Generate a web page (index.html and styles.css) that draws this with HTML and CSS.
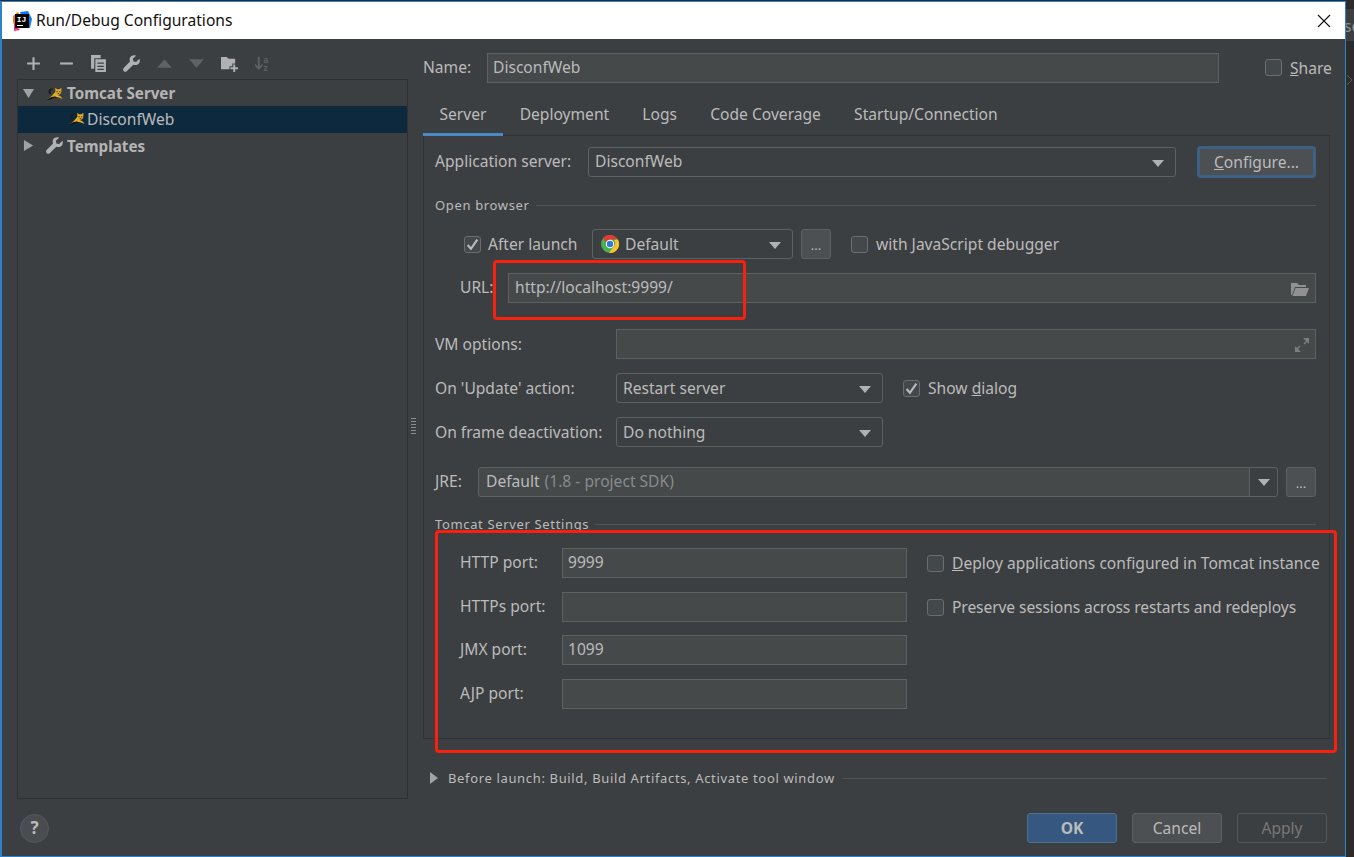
FILE: index.html
```html
<!DOCTYPE html>
<html lang="en">
<head>
<meta charset="utf-8">
<title>Run/Debug Configurations</title>
<link rel="stylesheet" href="styles.css">
</head>
<body>
<div class="screen">
  <div class="edge-tab">se</div>
  <svg class="edge-chevron" viewBox="0 0 6 12"><path d="M0 1 5 6 0 11" /></svg>
  <div class="dialog">
    <header class="titlebar">
      <svg class="app-logo" viewBox="0 0 20 20" width="20" height="20">
        <path d="M1 5 L6 1 L9 6 L3 16 L1 11Z" fill="#f97a12"/>
        <path d="M2 12 L8 19 L2 20Z" fill="#fc3172"/>
        <path d="M8 1 L16 0 L20 8 L18 17 L13 16Z" fill="#087cfa"/>
        <rect x="3" y="3" width="14" height="14" fill="#000"/>
        <rect x="5" y="14" width="6" height="1" fill="#fff"/>
        <text x="4.800" y="11" class="app-logo-text">IJ</text>
      </svg>
      <span class="title">Run/Debug Configurations</span>
      <svg class="close" viewBox="0 0 14 14" width="14" height="14"><path d="M1 1 L13 13 M13 1 L1 13" stroke="#111" stroke-width="1.100" fill="none"/></svg>
    </header>

    <div class="body">
      <aside class="left">
        <div class="toolbar">
          <svg class="tool" viewBox="0 0 16 16"><path d="M7 2h2v5h5v2H9v5H7V9H2V7h5z"/></svg>
          <svg class="tool" viewBox="0 0 16 16"><path d="M2 7h12v2H2z"/></svg>
          <svg class="tool" viewBox="0 0 16 16"><path d="M1 0h9v3H4v10H1z"/><path fill-rule="evenodd" d="M5 4h10v12H5zM7 7v1.300h6V7zM7 10v1.300h6V10zM7 13v1.200h6V13z"/></svg>
          <svg class="tool" viewBox="0 0 16 16"><path d="M15.500 3.500 12.300 6.500 9.800 6 9.300 3.600 12.300.7C10 -.3 7.300.5 6.500 2.800 6.100 4 6.200 5.100 6.600 6.100L.6 12.300C-.1 13.100-.1 14.300.7 15.200 1.600 16 2.800 16 3.500 15.200L9.700 9.200C12 10 14.500 9.200 15.500 7 16 5.900 16 4.600 15.500 3.500Z"/></svg>
          <svg class="tool tool-off" viewBox="0 0 16 16"><path d="M8 4 15 12H1z"/></svg>
          <svg class="tool tool-off" viewBox="0 0 16 16"><path d="M1 4h14L8 12z"/></svg>
          <svg class="tool" viewBox="0 0 18 18"><path d="M0 2h6l2 2h7v5h-3v3H9v3H0z"/><path d="M13 10h2v3h3v2h-3v3h-2v-3h-3v-2h3z"/></svg>
          <svg class="tool tool-off" viewBox="0 0 18 18"><path d="M4 2h2v10l3-3v2.500L5 16 1 11.500V9l3 3z"/><text x="10" y="8" class="sort-text">a</text><text x="10" y="17" class="sort-text">z</text></svg>
        </div>
        <div class="tree">
          <div class="tree-row tree-bold">
            <svg class="twisty" viewBox="0 0 12 12"><path d="M0 1h12L6 11z"/></svg>
            <svg class="cat" viewBox="0 0 18 14"><use href="#cat"/></svg>
            <span>Tomcat Server</span>
          </div>
          <div class="tree-row tree-selected">
            <svg class="cat" viewBox="0 0 18 14"><use href="#cat"/></svg>
            <span>DisconfWeb</span>
          </div>
          <div class="tree-row tree-bold tree-templates">
            <svg class="twisty" viewBox="0 0 12 12"><path d="M1 0l10 6-10 6z"/></svg>
            <svg class="wrench" viewBox="0 0 16 16"><path d="M15.500 3.500 12.300 6.500 9.800 6 9.300 3.600 12.300.7C10 -.3 7.300.5 6.500 2.800 6.100 4 6.200 5.100 6.600 6.100L.6 12.300C-.1 13.100-.1 14.300.7 15.200 1.600 16 2.800 16 3.500 15.200L9.700 9.200C12 10 14.500 9.200 15.500 7 16 5.900 16 4.600 15.500 3.500Z"/></svg>
            <span>Templates</span>
          </div>
        </div>
        <div class="help">?</div>
      </aside>

      <div class="splitter"><span class="grip"></span></div>

      <main class="right">
        <div class="name-row">
          <label class="name-label">Name:</label>
          <div class="field name-field">DisconfWeb</div>
          <div class="share"><span class="check"></span><span><u>S</u>hare</span></div>
        </div>

        <nav class="tabs">
          <span class="tab tab-active">Server</span>
          <span class="tab">Deployment</span>
          <span class="tab">Logs</span>
          <span class="tab">Code Coverage</span>
          <span class="tab">Startup/Connection</span>
        </nav>

        <section class="panel">
          <div class="row row-app">
            <label class="label-app">Application server:</label>
            <div class="select select-app">DisconfWeb<i class="arrow"></i></div>
            <button class="btn-configure"><u>C</u>onfigure...</button>
          </div>

          <div class="group-title title-browser"><span>Open browser</span><i></i></div>

          <div class="row row-launch">
            <span class="check check-on"><svg viewBox="0 0 14 14"><path d="M2.500 7.500 5.500 11 11.500 2.500" /></svg></span>
            <span class="after-label">After launch</span>
            <div class="select select-browser">
              <svg class="chrome" viewBox="0 0 18 18">
                <circle cx="9" cy="9" r="9" fill="#4caf50"/>
                <path d="M9 0a9 9 0 0 1 7.800 4.500H9A4.500 4.500 0 0 0 4.900 7.200L2 2.700A9 9 0 0 1 9 0z" fill="#e53935"/>
                <path d="M16.800 4.500A9 9 0 0 1 8 18l4.500-6.200A4.500 4.500 0 0 0 13 5z" fill="#fbc02d"/>
                <circle cx="9" cy="9" r="4.200" fill="#fff"/>
                <circle cx="9" cy="9" r="3.200" fill="#2d7dd2"/>
              </svg>
              Default<i class="arrow"></i></div>
            <span class="btn-more">...</span>
            <span class="check check-js"></span>
            <span>with <u>J</u>avaScript debugger</span>
          </div>

          <div class="row row-url">
            <label class="label-url">URL:</label>
            <div class="field field-url">http://localhost:9999/
              <svg class="folder" viewBox="0 0 18 14"><path d="M0 1h6l2 2h7v2H4L1 13H0z"/><path d="M4.500 6H18l-3 8H1.500z"/></svg>
            </div>
          </div>

          <div class="row row-vm">
            <label class="label-wide">VM options:</label>
            <div class="field field-grow">
              <svg class="expand" viewBox="0 0 16 16"><path d="M9 1h6v6l-2-2-2.500 2.500-1-1L12 4zM7 15H1V9l2 2 2.500-2.500 1 1L4 12z"/></svg>
            </div>
          </div>

          <div class="row row-update">
            <label class="label-wide">On 'Update' action:</label>
            <div class="select select-action">Restart server<i class="arrow"></i></div>
            <span class="check check-on check-dialog"><svg viewBox="0 0 14 14"><path d="M2.500 7.500 5.500 11 11.500 2.500" /></svg></span>
            <span>Show <u>d</u>ialog</span>
          </div>

          <div class="row row-frame">
            <label class="label-wide">On frame deactivation:</label>
            <div class="select select-action">Do nothing<i class="arrow"></i></div>
          </div>

          <div class="row row-jre">
            <label class="label-jre">JRE:</label>
            <div class="jre-combo">
              <div class="jre-text">Default <span class="muted">(1.8 - project SDK)</span></div>
              <div class="jre-arrow"><i class="arrow arrow-static"></i></div>
            </div>
            <span class="btn-more">...</span>
          </div>

          <div class="group-title title-tomcat"><span>Tomcat Server Settings</span><i></i></div>

          <div class="ports">
            <div class="port-col">
              <div class="row port"><label class="label-port">HTTP port:</label><div class="field field-port">9999</div></div>
              <div class="row port"><label class="label-port">HTTPs port:</label><div class="field field-port"></div></div>
              <div class="row port"><label class="label-port">JMX port:</label><div class="field field-port">1099</div></div>
              <div class="row port"><label class="label-port">AJP port:</label><div class="field field-port"></div></div>
            </div>
            <div class="opt-col">
              <div class="opt"><span class="check"></span><span><u>D</u>eploy applications configured in Tomcat instance</span></div>
              <div class="opt"><span class="check"></span><span class="opt-preserve">Preserve sessions across restarts and redeploys</span></div>
            </div>
          </div>
        </section>

        <div class="before">
          <svg class="before-arrow" viewBox="0 0 8 12"><path d="M0 0l8 6-8 6z"/></svg>
          <span>Before launch: Build, Build Artifacts, Activate tool window</span>
          <i></i>
        </div>

        <div class="actions">
          <button class="btn btn-ok">OK</button>
          <button class="btn btn-cancel">Cancel</button>
          <button class="btn btn-apply">Apply</button>
        </div>
      </main>
    </div>
  </div>

  <div class="mark mark-url"></div>
  <div class="mark mark-tomcat"></div>
</div>

<svg class="defs" width="0" height="0" aria-hidden="true">
  <defs>
    <g id="cat">
      <path d="M4 8 C1.500 6 2 2 6 1.500 L8 2 L6 3.200 C4.500 4 4.200 6 5.500 7 Z" fill="#1b1b1b"/>
      <path d="M0 13 C3 12.500 5 11 7 8.500 L10 5 L9.800 .8 L11.800 2.300 L14.500 2.300 L16.500 .8 L16.300 5.500 C16 7.500 14.500 8.500 13 8.800 L15.500 10 L17.800 12.800 L13 11 L9 10.500 L4 13 Z" fill="#e3ad26"/>
      <path d="M.5 13.500 L6 10.800 L9.500 10.300 L12 11.300 L8 12 L4 13.800Z" fill="#141414"/>
      <path d="M11.200 4.500h1.200v1.200h-1.200zM14 4.500h1.200v1.200H14zM12.400 6.800h1.600v1h-1.600z" fill="#1b1b1b"/>
    </g>
  </defs>
</svg>
</body>
</html>
```

FILE: styles.css
```css
* { box-sizing: border-box; }
html, body { margin: 0; padding: 0; }
body { background: #2b2b2b; }

.screen {
  position: relative;
  width: 1354px;
  height: 857px;
  overflow: hidden;
  background: #2b2b2b;
  font-family: "Noto Sans", "Open Sans", sans-serif;
  font-size: 15.600px;
  color: #bbbbbb;
}

.edge-tab {
  position: absolute;
  left: 1336px; top: 9px;
  width: 18px; height: 32px;
  padding-left: 8px;
  background: #3c3f41;
  color: #8f9193;
  line-height: 34px;
  white-space: nowrap;
  overflow: hidden;
}
.edge-chevron { position: absolute; left: 1347px; top: 74px; width: 6px; height: 12px; fill: none; stroke: #6b5a35; stroke-width: 1; }
.defs { position: absolute; }

.dialog {
  position: relative;
  z-index: 1;
  width: 1346px;
  height: 856px;
  margin-top: 1px;
  border: 1px solid #2f82c8;
  border-left-width: 2px;
  background: #3c3f41;
  display: flex;
  flex-direction: column;
}

.titlebar {
  height: 37px;
  flex: none;
  background: #fff;
  color: #111;
  display: flex;
  align-items: center;
  padding: 0 14px 0 10px;
}
.app-logo { flex: none; }
.app-logo-text { font: bold 8px "Liberation Mono", monospace; fill: #fff; }
.title { margin-left: 4px; padding-bottom: 1px; }
.close { margin-left: auto; }

.body { flex: 1; display: flex; min-height: 0; }

.left { width: 391px; margin-left: 15px; flex: none; display: flex; flex-direction: column; }
.toolbar { height: 40px; display: flex; align-items: center; padding: 9px 0 0 8px; gap: 15.700px; }
.tool { width: 17px; height: 17px; fill: #afb1b3; flex: none; }
.tool-off { fill: #5f6264; }
.sort-text { font: bold 9px "Liberation Sans", sans-serif; fill: #5f6264; }

.tree { height: 720px; border: 1px solid #2f3031; flex: none; }
.tree-row { height: 27px; display: flex; align-items: center; padding-left: 5px; }
.tree-row:first-child { height: 26px; }
.tree-bold { font-weight: 700; font-size: 15.200px; color: #b4b4b4; }
.tree-selected { background: #0d293e; padding-left: 50px; padding-bottom: 2px; }
.tree-templates { padding-bottom: 2px; }
.twisty { width: 11px; height: 11px; fill: #a0a2a4; margin-right: 12px; flex: none; }
.cat { width: 17px; height: 13px; margin-right: 2px; flex: none; }
.tree-bold .cat { margin-right: 4px; }
.wrench { width: 17px; height: 17px; fill: #afb1b3; margin-right: 4px; flex: none; }

.help {
  width: 29px; height: 29px;
  margin: 15px 0 0 3px;
  border-radius: 50%;
  background: #4a4d4f;
  border: 1px solid #56595b;
  color: #bbbbbb;
  font-weight: 700;
  font-size: 17px;
  line-height: 26px;
  text-align: center;
}

.splitter { width: 15px; flex: none; padding: 378px 0 0 3px; }
.grip {
  display: block; width: 5px; height: 17px;
  background-image: radial-gradient(circle, #8a8c8e 0.900px, transparent 1px);
  background-size: 2.500px 3px;
}

.right { width: 907px; flex: none; display: flex; flex-direction: column; }

.row { display: flex; align-items: center; }
label { padding-bottom: 2px; white-space: nowrap; }

.name-row { display: flex; align-items: center; margin-top: 14px; height: 30px; }
.name-label { width: 64px; flex: none; }
.name-field { width: 732px; flex: none; }
.share { margin-left: 46px; flex: none; display: flex; align-items: center; gap: 8px; white-space: nowrap; padding-bottom: 1px; }

.field {
  height: 30px;
  background: #45494a;
  border: 1px solid #5e6162;
  display: flex;
  align-items: center;
  padding: 0 0 2px 5px;
  position: relative;
  white-space: nowrap;
  color: #bbbbbb;
}

.select {
  height: 30px;
  border: 1px solid #5e6162;
  border-radius: 3px;
  display: flex;
  align-items: center;
  padding: 0 0 2px 6px;
  position: relative;
  white-space: nowrap;
}
.arrow {
  position: absolute;
  right: 11px; top: 12px;
  border-left: 6px solid transparent;
  border-right: 6px solid transparent;
  border-top: 7px solid #afb1b3;
}
.arrow-static { position: static; display: block; }

.check {
  width: 17px; height: 17px;
  flex: none;
  border: 1px solid #6b6e70;
  border-radius: 3px;
  background: #43494a;
  display: block;
}
.check svg { display: block; width: 15px; height: 15px; fill: none; stroke: #bbbbbb; stroke-width: 2; }

.tabs { display: flex; margin-top: 17px; height: 36px; flex: none; position: relative; z-index: 1; }
.tab { padding: 2px 16.500px 0; margin-right: 0.200px; height: 36px; line-height: 24px; border-bottom: 3px solid transparent; }
.tab-active { border-bottom-color: #4a88c7; }

.panel {
  height: 604px;
  margin-top: -1px;
  border: 1px solid #323334;
  padding: 11px 13px 0 11px;
  flex: none;
}

.row-app { height: 30px; }
.label-app { width: 153px; flex: none; }
.select-app { width: 588px; flex: none; }
.btn-configure {
  width: 119px; height: 32px;
  margin-left: 21px;
  border: 3px solid #3d6185;
  border-radius: 4px;
  background: #4c5052;
  color: #bbbbbb;
  font: inherit;
  padding: 0;
  flex: none;
}

.group-title { display: flex; align-items: center; gap: 6px; font-size: 13px; letter-spacing: 0.650px; height: 18px; }
.group-title i { flex: 1; height: 1px; background: #515355; }
.title-browser { margin-top: 19px; }
.title-tomcat { margin-top: 18px; }

.row-launch { margin-top: 15px; height: 30px; padding-left: 29px; white-space: nowrap; }
.after-label { margin-left: 7px; width: 104px; flex: none; }
.select-browser { width: 201px; padding: 0 0 0 8px; gap: 6px; flex: none; }
.chrome { width: 18px; height: 18px; flex: none; }
.btn-more {
  width: 30px; height: 30px;
  margin-left: 8px;
  background: #4c5052;
  border: 1px solid #5e6162;
  border-radius: 3px;
  display: flex;
  justify-content: center;
  flex: none;
  line-height: 30px;
  font-size: 13px;
}
.check-js { margin: 0 8px 0 20px; }

.row-url { margin-top: 14px; height: 30px; padding-left: 25px; }
.label-url { width: 48px; flex: none; }
.field-url { flex: 1; padding-left: 6px; }
.folder { position: absolute; right: 6px; top: 8px; width: 18px; height: 14px; fill: #8f9193; }

.row-vm { margin-top: 26px; height: 30px; }
.label-wide { width: 181px; flex: none; padding-bottom: 0; }
.field-grow { flex: 1; }
.expand { position: absolute; right: 5px; top: 7px; width: 16px; height: 16px; fill: #7c7f81; }

.row-update { margin-top: 14px; height: 30px; }
.row-frame { margin-top: 14px; height: 30px; }
.select-action { width: 267px; flex: none; padding-bottom: 0; }
.check-dialog { margin: 0 8px 0 20px; }

.row-jre { margin-top: 20px; height: 30px; }
.label-jre { width: 43px; flex: none; }
.jre-combo { flex: 1; height: 30px; display: flex; background: #45494a; border: 1px solid #5e6162; border-radius: 3px; }
.jre-text { flex: 1; display: flex; align-items: center; padding: 0 0 2px 7px; gap: 5px; white-space: nowrap; }
.muted { color: #888b8d; }
.jre-arrow { width: 28px; flex: none; background: #3c3f41; border-left: 1px solid #5e6162; display: flex; align-items: center; justify-content: center; border-radius: 0 3px 3px 0; }

.ports { display: flex; margin-top: 15px; }
.port-col { width: 492px; flex: none; display: flex; flex-direction: column; gap: 13.670px; padding-left: 25px; }
.port { height: 30px; }
.label-port { width: 102px; flex: none; }
.field-port { width: 345px; }
.opt-col { display: flex; flex-direction: column; gap: 26px; padding-top: 6px; white-space: nowrap; }
.opt { display: flex; align-items: center; height: 18px; gap: 8px; }
.opt span:last-child { padding-bottom: 1px; }
.opt-preserve { letter-spacing: -0.090px; }

.before { display: flex; align-items: center; height: 18px; margin-top: 30px; padding-left: 7px; font-size: 13px; letter-spacing: 0.650px; width: 904px; white-space: nowrap; }
.before-arrow { width: 8px; height: 12px; fill: #a0a2a4; margin-right: 10px; flex: none; }
.before i { flex: 1; height: 1px; margin-left: 8px; background: #515355; }

.actions { display: flex; justify-content: flex-end; gap: 15px; width: 904px; margin-top: 26px; }
.btn { width: 90px; height: 30px; border-radius: 3px; font: inherit; padding: 0; }
.btn-ok { background: #365880; border: 1px solid #4c708c; color: #bbbbbb; font-weight: 700; }
.btn-cancel { background: #4c5052; border: 1px solid #5e6162; color: #bbbbbb; }
.btn-apply { background: transparent; border: 1px solid #55585a; color: #777777; }

.mark { position: absolute; z-index: 2; border: 3px solid #f8200f; border-radius: 4px; pointer-events: none; }
.mark-url { left: 493px; top: 260px; width: 253px; height: 60px; }
.mark-tomcat { left: 435px; top: 530px; width: 902px; height: 223px; }
```
